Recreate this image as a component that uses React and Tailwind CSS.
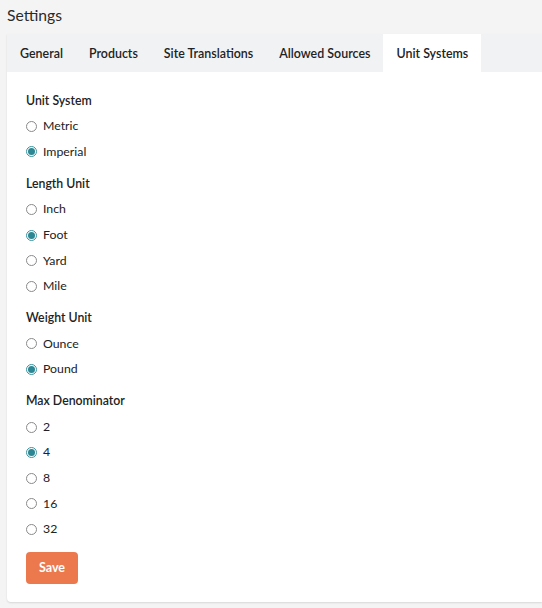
import { useState } from 'react';

const tabs = ['General', 'Products', 'Site Translations', 'Allowed Sources', 'Unit Systems'];

const groups = [
  { key: 'system', label: 'Unit System', options: ['Metric', 'Imperial'], value: 'Imperial' },
  { key: 'length', label: 'Length Unit', options: ['Inch', 'Foot', 'Yard', 'Mile'], value: 'Foot' },
  { key: 'weight', label: 'Weight Unit', options: ['Ounce', 'Pound'], value: 'Pound' },
  { key: 'denom', label: 'Max Denominator', options: ['2', '4', '8', '16', '32'], value: '4' },
];

function Radio({ label, checked, onChange }) {
  return (
    <label className="flex h-[25.6px] items-center cursor-pointer" onClick={onChange}>
      <span
        className={`flex h-[11px] w-[11px] items-center justify-center rounded-full border bg-white ${
          checked ? 'border-[#3b939e]' : 'border-[#8a8a8a]'
        }`}
      >
        {checked && <span className="h-[7px] w-[7px] rounded-full bg-[#2b8793]" />}
      </span>
      <span className="ml-[6px] text-[12.3px] text-[#222]">{label}</span>
    </label>
  );
}

export default function App() {
  const [activeTab, setActiveTab] = useState('Unit Systems');
  const [values, setValues] = useState(
    Object.fromEntries(groups.map((g) => [g.key, g.value]))
  );

  return (
    <div className="min-h-screen bg-[#f4f4f5] pl-[7px] font-['Lato',sans-serif]">
      <h1 className="h-[34px] pt-[5px] text-[15.7px] leading-5 text-[#2a2a2a]">Settings</h1>

      <div className="rounded-bl-[4px] bg-white pb-[18px] shadow-[0_1px_2px_rgba(0,0,0,0.12)]">
        <div className="flex h-[38px] bg-[#f1f2f4]">
          {tabs.map((t) => (
            <button
              key={t}
              onClick={() => setActiveTab(t)}
              className={`h-full px-[13px] pt-[2px] text-[12.45px] font-semibold text-[#222] cursor-pointer ${
                activeTab === t ? 'bg-white' : ''
              }`}
            >
              {t}
            </button>
          ))}
        </div>

        <div className="px-[19px] pt-4">
          {groups.map((g, i) => (
            <div key={g.key} className={i > 0 ? 'mt-[6.4px]' : ''}>
              <div className="flex h-[25.6px] items-center text-[12.3px] font-semibold text-[#222]">
                {g.label}
              </div>
              {g.options.map((o) => (
                <Radio
                  key={o}
                  label={o}
                  checked={values[g.key] === o}
                  onChange={() => setValues({ ...values, [g.key]: o })}
                />
              ))}
            </div>
          ))}

          <button className="mt-[10px] h-8 w-[52px] rounded-[4px] bg-[#ec794e] text-[12.5px] font-bold text-white cursor-pointer">
            Save
          </button>
        </div>
      </div>
    </div>
  );
}
